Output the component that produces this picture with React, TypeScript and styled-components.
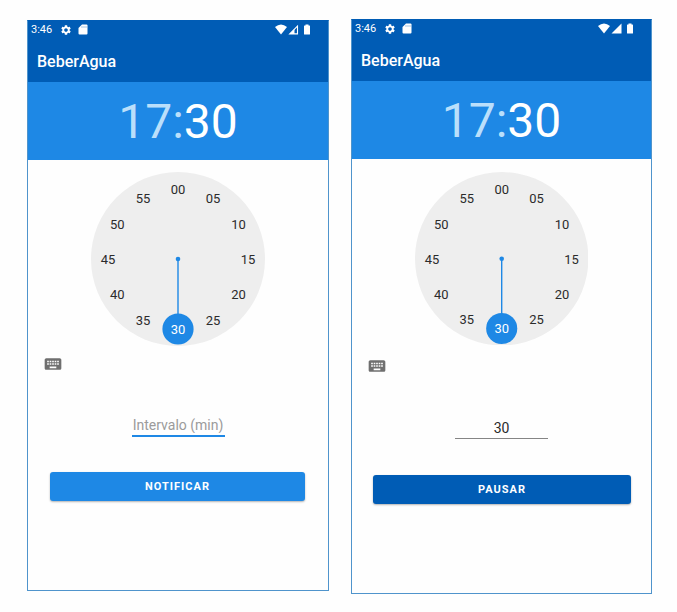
import React from "react";
import styled, { createGlobalStyle } from "styled-components";
import { MdKeyboard, MdSettings } from "react-icons/md";

const colors = {
  dark: "#005cb5",
  primary: "#1e88e5",
  dial: "#eeeeee",
  ink: "#2b2b2b",
  frame: "#4f94cc",
};

const GlobalStyle = createGlobalStyle`
  *, *::before, *::after { box-sizing: border-box; }
  body { margin: 0; background: #fefefe; font-family: Roboto, "Liberation Sans", sans-serif; }
  button, input { font: inherit; }
`;

const Page = styled.main`
  display: flex;
  align-items: flex-start;
  gap: 22px;
  min-height: 100vh;
  padding: 19px 25px 19px 27px;
`;

const Phone = styled.section<{ $roomy: boolean }>`
  flex: ${(p) => (p.$roomy ? 301 : 302)} 1 0;
  min-width: 0;
  margin-top: ${(p) => (p.$roomy ? 0 : 1)}px;
  padding-bottom: 89px;
  display: flex;
  flex-direction: column;
  border: 1px solid ${colors.frame};
  border-top-color: ${colors.dark};
  background: #fefefe;
`;

const TopBar = styled.header`
  height: 61px;
  background: ${colors.dark};
  color: #fff;
`;

const StatusBar = styled.div`
  display: flex;
  align-items: center;
  height: 17px;
  padding: 0 16px 0 3px;
  font-size: 11px;
  line-height: 16px;
`;

const Notices = styled.div`
  display: flex;
  align-items: center;
  gap: 6px;
  margin-left: 8px;
  flex: 1;
`;

const Signals = styled.div`
  display: flex;
  align-items: center;
  gap: 1px;
`;

const Title = styled.h1`
  margin: 0;
  padding: 12px 9px 0;
  font-size: 16px;
  line-height: 24px;
  font-weight: 500;
`;

const TimeBand = styled.div`
  display: flex;
  justify-content: center;
  align-items: flex-start;
  height: 78px;
  padding-top: 12px;
  background: ${colors.primary};
  color: #fff;
  font-size: 48px;
  line-height: 56px;
`;

const TimePart = styled.button<{ $active?: boolean }>`
  padding: 0;
  border: 0;
  background: none;
  line-height: 56px;
  color: ${(p) => (p.$active ? "#fff" : "#badffb")};
  cursor: pointer;
`;

const Colon = styled.span`
  color: #badffb;
`;

const Dial = styled.svg<{ $roomy: boolean }>`
  display: block;
  width: 58%;
  margin: ${(p) => (p.$roomy ? 13 : 12)}px auto 0;
  font-size: 13px;
  text-anchor: middle;
`;

const KeyboardButton = styled.button<{ $roomy: boolean }>`
  display: flex;
  align-self: flex-start;
  margin: ${(p) => (p.$roomy ? 11 : 8)}px 0 0 15px;
  padding: 0;
  border: 0;
  background: none;
  color: #6f6f6f;
  cursor: pointer;
`;

const IntervalInput = styled.input<{ $focused: boolean }>`
  width: 93px;
  height: ${(p) => (p.$focused ? 22 : 21)}px;
  margin: ${(p) => (p.$focused ? 41 : 42)}px auto 0;
  padding: 0;
  border: 0;
  border-bottom: ${(p) => (p.$focused ? `2px solid ${colors.primary}` : "1px solid #858585")};
  border-radius: 0;
  outline: 0;
  background: none;
  color: ${colors.ink};
  font-size: 14px;
  line-height: 20px;
  text-align: center;

  &::placeholder {
    color: #9b9b9b;
    opacity: 1;
  }
`;

const ActionButton = styled.button<{ $dark: boolean }>`
  height: 29px;
  margin: ${(p) => (p.$dark ? "36px 20px 0 21px" : "35px 23px 0 22px")};
  padding: 1px 0 0;
  border: 0;
  border-radius: 3px;
  background: ${(p) => (p.$dark ? colors.dark : colors.primary)};
  box-shadow: 0 1px 2px rgba(0, 0, 0, 0.3);
  color: #fff;
  font-size: 11px;
  line-height: 16px;
  font-weight: 700;
  letter-spacing: 1px;
  cursor: pointer;
`;

function SdCardIcon() {
  return (
    <svg width="10" height="11" viewBox="0 0 10 11" fill="#fff" aria-hidden="true">
      <path d="M4 .5h4.5q1 0 1 1v8q0 1-1 1h-7q-1 0-1-1V4z" />
      <path d="M4 2v2M6 2v2M8 2v2" stroke={colors.dark} strokeWidth=".7" opacity=".5" />
    </svg>
  );
}

function WifiIcon() {
  return (
    <svg width="12" height="11" viewBox="0 0 12 11" fill="#fff" aria-hidden="true">
      <path d="M0 3Q6-2 12 3L6 10.5z" />
    </svg>
  );
}

function CellIcon({ full }: { full: boolean }) {
  return (
    <svg width="11" height="11" viewBox="0 0 11 11" aria-hidden="true">
      {full ? (
        <path d="M10.5.5v10H.5z" fill="#fff" />
      ) : (
        <>
          <path d="M9.5 2v7.9H1.7z" fill="none" stroke="#fff" strokeWidth="1.1" />
          <path d="M6.5 5v5H1.5z" fill="#fff" />
        </>
      )}
    </svg>
  );
}

function BatteryIcon() {
  return (
    <svg width="12" height="11" viewBox="0 0 12 11" fill="#fff" aria-hidden="true">
      <path d="M5.5.5h3v1h1q.5 0 .5.5v8q0 .5-.5.5h-5Q4 10.5 4 10V2q0-.5.5-.5h1z" />
    </svg>
  );
}

const minutes = Array.from({ length: 12 }, (_, i) => i * 5);

function ClockDial({ selected, roomy }: { selected: number; roomy: boolean }) {
  const point = (minute: number, radius: number) => {
    const angle = (minute / 60) * Math.PI * 2;
    return { x: 87 + Math.sin(angle) * radius, y: 87 - Math.cos(angle) * radius };
  };
  const knob = point(selected, 70);
  return (
    <Dial $roomy={roomy} viewBox="0 0 174 174" role="img" aria-label={`${selected} minutos`}>
      <circle cx="87" cy="87" r="87" fill={colors.dial} />
      <line x1="87" y1="87" x2={knob.x} y2={knob.y} stroke={colors.primary} strokeWidth="1.4" />
      <circle cx="87" cy="87" r="2.3" fill={colors.primary} />
      <circle cx={knob.x} cy={knob.y} r="15.6" fill={colors.primary} />
      {minutes.map((minute) => {
        const { x, y } = point(minute, 70);
        return (
          <text key={minute} x={x} y={y + 5} fill={minute === selected ? "#fff" : colors.ink}>
            {String(minute).padStart(2, "0")}
          </text>
        );
      })}
    </Dial>
  );
}

interface ScreenProps {
  running: boolean;
  interval: string;
  action: string;
}

function Screen({ running, interval, action }: ScreenProps) {
  return (
    <Phone $roomy={running}>
      <TopBar>
        <StatusBar>
          <span>3:46</span>
          <Notices>
            <MdSettings size={12} aria-hidden="true" />
            <SdCardIcon />
          </Notices>
          <Signals>
            <WifiIcon />
            <CellIcon full={running} />
            <BatteryIcon />
          </Signals>
        </StatusBar>
        <Title>BeberAgua</Title>
      </TopBar>
      <TimeBand>
        <TimePart type="button">17</TimePart>
        <Colon>:</Colon>
        <TimePart type="button" $active>30</TimePart>
      </TimeBand>
      <ClockDial selected={30} roomy={running} />
      <KeyboardButton type="button" aria-label="Teclado" $roomy={running}>
        <MdKeyboard size={20} />
      </KeyboardButton>
      <IntervalInput
        $focused={!running}
        aria-label="Intervalo (min)"
        placeholder="Intervalo (min)"
        defaultValue={interval}
        inputMode="numeric"
      />
      <ActionButton type="button" $dark={running}>{action}</ActionButton>
    </Phone>
  );
}

export default function App() {
  return (
    <>
      <GlobalStyle />
      <Page>
        <Screen running={false} interval="" action="NOTIFICAR" />
        <Screen running interval="30" action="PAUSAR" />
      </Page>
    </>
  );
}
